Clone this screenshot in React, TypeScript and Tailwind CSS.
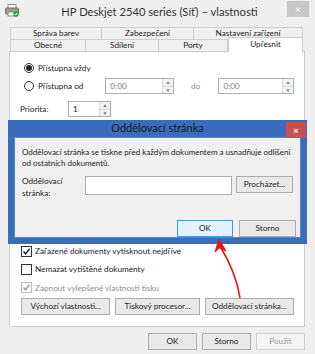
import React from "react";

const font = { fontFamily: 'Lato, "Liberation Sans", sans-serif' };

function Spin({ value, className, dark }: { value: string; className: string; dark?: boolean }) {
  return (
    <div className={`flex h-[16px] border border-[#abadb3] bg-white ${className}`}>
      <div className={`flex-1 pl-[4px] leading-[14px] ${dark ? "text-[#1b1b1b]" : "text-[#7a7a7a]"}`}>{value}</div>
      <div className="flex w-[11px] flex-col border-l border-[#d9d9d9]">
        <div className="flex flex-1 items-center justify-center border-b border-[#d9d9d9] bg-[#f2f2f2] text-[5px] leading-none text-[#777]">▲</div>
        <div className="flex flex-1 items-center justify-center bg-[#f2f2f2] text-[5px] leading-none text-[#777]">▼</div>
      </div>
    </div>
  );
}

function Radio({ checked, label }: { checked?: boolean; label: string }) {
  return (
    <div className="flex items-center gap-[4px] whitespace-nowrap">
      <div className="flex h-[10px] w-[10px] items-center justify-center rounded-full border border-[#333] bg-white">
        {checked && <div className="h-[6px] w-[6px] rounded-full bg-[#222]" />}
      </div>
      <span>{label}</span>
    </div>
  );
}

function Check({ checked, disabled, label }: { checked?: boolean; disabled?: boolean; label: string }) {
  return (
    <div className={`flex items-center gap-[3px] whitespace-nowrap ${disabled ? "text-[#8d8d8d]" : ""}`}>
      <div className={`flex h-[11px] w-[11px] items-center justify-center border bg-white ${disabled ? "border-[#bcbcbc]" : "border-[#333]"}`}>
        {checked && (
          <svg width="9" height="9" viewBox="0 0 9 9">
            <path d="M1.5 4.5 L3.6 6.8 L7.6 1.8" fill="none" stroke={disabled ? "#9a9a9a" : "#222"} strokeWidth="1.4" />
          </svg>
        )}
      </div>
      <span>{label}</span>
    </div>
  );
}

function Btn({ children, className, focus, disabled }: { children: React.ReactNode; className: string; focus?: boolean; disabled?: boolean }) {
  return (
    <div
      className={`flex items-center justify-center whitespace-nowrap border ${
        focus ? "border-[#3c9be6] bg-[#e5f1fb]" : disabled ? "border-[#d0d0d0] bg-[#f4f4f4] text-[#9c9c9c]" : "border-[#adadad] bg-[#e9e9e9]"
      } ${className}`}
    >
      {children}
    </div>
  );
}

function Tab({ label, className }: { label: string; className: string }) {
  return (
    <div className={`flex h-[12px] items-center justify-center whitespace-nowrap border border-b-0 border-[#cdcdcd] bg-[#f0f0f0] leading-none ${className}`}>
      {label}
    </div>
  );
}

export default function App() {
  return (
    <div className="relative h-[354px] w-[315px] overflow-hidden bg-[#efefef] text-[8.2px] text-[#1b1b1b]" style={font}>
      {/* title bar */}
      <div className="relative flex h-[24px] items-center justify-center">
        <svg className="absolute left-[5px] top-[4px]" width="14" height="13" viewBox="0 0 14 13">
          <rect x="3" y="0.5" width="8" height="4" fill="#fff" stroke="#8a8a8a" />
          <rect x="0.5" y="4" width="13" height="6" rx="1" fill="#9c9c9c" stroke="#6f6f6f" />
          <rect x="3" y="8" width="8" height="4" fill="#fff" stroke="#8a8a8a" />
          <circle cx="11" cy="10" r="2.8" fill="#2fa63a" />
          <path d="M9.6 10 L10.6 11 L12.4 9" stroke="#fff" strokeWidth="1" fill="none" />
        </svg>
        <span className="ml-[4px] text-[11.2px] text-[#333]">HP Deskjet 2540 series (Síť) – vlastnosti</span>
        <div className="absolute right-[6px] top-[1px] flex h-[16px] w-[22px] items-center justify-center bg-[#c7c7c7] text-[10px] text-white">×</div>
      </div>

      {/* tabs */}
      <div className="mx-[10px] mt-[3px] flex w-[293px]">
        <Tab label="Správa barev" className="w-[92px]" />
        <Tab label="Zabezpečení" className="w-[92px] border-l-0" />
        <Tab label="Nastavení zařízení" className="flex-1 border-l-0" />
      </div>
      <div className="relative mx-[10px] flex w-[293px]">
        <Tab label="Obecné" className="w-[76px]" />
        <Tab label="Sdílení" className="w-[73px] border-l-0" />
        <Tab label="Porty" className="w-[69px] border-l-0" />
        <div className="relative z-10 -mt-[2px] mb-[-1px] flex h-[15px] flex-1 items-center justify-center border border-b-0 border-[#cdcdcd] bg-white pb-[2px] leading-none">
          Upřesnit
        </div>
      </div>

      {/* tab panel */}
      <div className="mx-[9px] flex h-[276px] w-[296px] flex-col border border-[#cdcdcd] bg-white px-[10px]">
        <div className="mt-[10px] flex flex-col gap-[4px] pl-[4px]">
          <Radio checked label="Přístupna vždy" />
          <div className="flex items-center">
            <div className="w-[83px]">
              <Radio label="Přístupna od" />
            </div>
            <Spin value="0:00" className="w-[70px]" />
            <span className="ml-[17px] w-[28px] text-[#8d8d8d]">do</span>
            <Spin value="0:00" className="w-[77px]" />
          </div>
        </div>
        <div className="mt-[7px] flex items-center">
          <span className="w-[48px]">Priorita:</span>
          <Spin value="1" dark className="w-[43px]" />
        </div>
        <div className="mt-[6px] flex items-center">
          <span className="w-[48px]">Ovladač:</span>
          <div className="h-[16px] w-[161px] border border-[#abadb3] bg-white" />
          <Btn className="ml-[3px] h-[17px] w-[66px]">Nový ovladač...</Btn>
        </div>
        <div className="flex-1" />
        <div className="flex flex-col gap-[6px] pl-[1px]">
          <Check checked label="Zařazené dokumenty vytisknout nejdříve" />
          <Check label="Nemazat vytištěné dokumenty" />
          <Check checked disabled label="Zapnout vylepšené vlastnosti tisku" />
        </div>
        <div className="mb-[11px] mt-[4px] flex gap-[5px] pl-[1px]">
          <Btn className="h-[17px] w-[90px]">Výchozí vlastnosti...</Btn>
          <Btn className="h-[17px] w-[85px]">Tiskový procesor...</Btn>
          <Btn className="h-[17px] w-[90px]">Oddělovací stránka...</Btn>
        </div>
      </div>

      {/* bottom buttons */}
      <div className="mr-[10px] mt-[6px] flex justify-end gap-[5px]">
        <Btn className="h-[17px] w-[49px]">OK</Btn>
        <Btn className="h-[17px] w-[49px]">Storno</Btn>
        <Btn disabled className="h-[17px] w-[49px]">Použít</Btn>
      </div>

      {/* separator page dialog */}
      <div className="absolute left-[8px] top-[120px] flex h-[124px] w-[299px] flex-col bg-[#3a6cbc] px-[6px] pb-[6px]">
        <div className="relative flex h-[22px] items-center justify-center">
          <span className="text-[11px] text-[#1a1a1a]">Oddělovací stránka</span>
          <div className="absolute right-[-5px] top-[2px] flex h-[16px] w-[20px] items-center justify-center bg-[#c75050] text-[10px] font-bold text-white">×</div>
        </div>
        <div className="flex flex-1 flex-col border border-[#5c86c8] bg-[#f0f0f0] px-[7px] pt-[9px]">
          <p className="whitespace-nowrap text-[8px] leading-[11px]">
            Oddělovací stránka se tiskne před každým dokumentem a usnadňuje odlišení
            <br />
            od ostatních dokumentů.
          </p>
          <div className="mt-[6px] flex items-start">
            <span className="w-[64px] leading-[12px]">Oddělovací stránka:</span>
            <div className="mt-[1px] h-[19px] w-[149px] border border-[#abadb3] bg-white" />
            <Btn className="ml-[4px] mt-[1px] h-[17px] w-[58px]">Procházet...</Btn>
          </div>
          <div className="-mr-[3px] mt-[21px] flex justify-end gap-[6px]">
            <Btn focus className="h-[17px] w-[56px]">OK</Btn>
            <Btn className="h-[17px] w-[57px]">Storno</Btn>
          </div>
        </div>
      </div>

      {/* red annotation arrow */}
      <svg className="pointer-events-none absolute left-0 top-0" width="315" height="354">
        <path d="M240 298 C238 284 232 266 220 246" fill="none" stroke="#e8141a" strokeWidth="1.6" />
        <path d="M219 239 L215 252 L219.5 248 L226 251 Z" fill="#e8141a" stroke="#e8141a" strokeWidth="1" />
      </svg>
    </div>
  );
}
